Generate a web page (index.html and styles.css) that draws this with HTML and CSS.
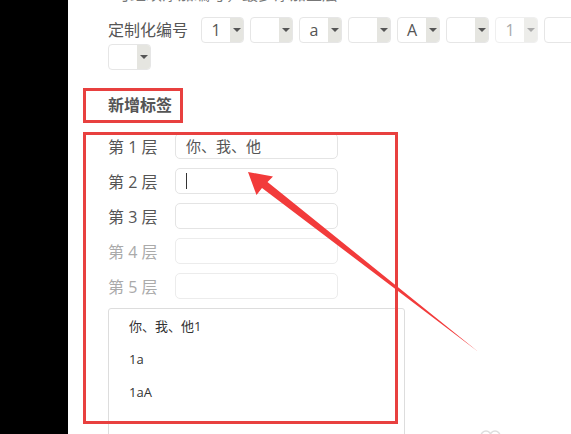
FILE: index.html
```html
<!DOCTYPE html>
<html lang="zh-CN">
  <head>
    <meta charset="UTF-8" />
    <meta name="viewport" content="width=device-width, initial-scale=1.0" />
    <title>新增标签</title>
    <link rel="stylesheet" href="styles.css">
  </head>
  <body>
    <div class="page">
      <div class="tip-line">可继续添加编号，最多添加五层 <span class="tip-mark"></span></div>

      <div class="code-row">
        <span class="code-label">定制化编号</span>
        <div class="pick"><span class="pick-val">1</span><span class="pick-btn"></span></div>
        <div class="pick"><span class="pick-val"></span><span class="pick-btn"></span></div>
        <div class="pick"><span class="pick-val">a</span><span class="pick-btn"></span></div>
        <div class="pick"><span class="pick-val"></span><span class="pick-btn"></span></div>
        <div class="pick"><span class="pick-val">A</span><span class="pick-btn"></span></div>
        <div class="pick"><span class="pick-val"></span><span class="pick-btn"></span></div>
        <div class="pick off"><span class="pick-val">1</span><span class="pick-btn"></span></div>
        <div class="pick"><span class="pick-val"></span><span class="pick-btn"></span></div>
        <div class="pick"><span class="pick-val"></span><span class="pick-btn"></span></div>
      </div>

      <h3 class="add-title">新增标签</h3>

      <div class="layers">
        <div class="layer-row">
          <span class="layer-label">第 1 层</span>
          <div class="layer-input">你、我、他</div>
        </div>
        <div class="layer-row">
          <span class="layer-label">第 2 层</span>
          <div class="layer-input"><span class="caret"></span></div>
        </div>
        <div class="layer-row">
          <span class="layer-label">第 3 层</span>
          <div class="layer-input"></div>
        </div>
        <div class="layer-row off">
          <span class="layer-label">第 4 层</span>
          <div class="layer-input"></div>
        </div>
        <div class="layer-row off">
          <span class="layer-label">第 5 层</span>
          <div class="layer-input"></div>
        </div>

        <ul class="preview">
          <li>你、我、他1</li>
          <li>1a</li>
          <li>1aA</li>
        </ul>

        <div class="mark"></div>
      </div>
    </div>

    <!-- pointer drawn over the form -->
    <svg class="pointer" width="571" height="434" viewBox="0 0 571 434">
      <polygon fill="#f23b3b"
        points="248,172 273,176.5 267.5,182 478.5,352 262,188 256.5,195" />
      <g fill="none" stroke="#dedede" stroke-width="1.5">
        <circle cx="486" cy="436" r="5" />
        <circle cx="495" cy="436" r="5" />
      </g>
    </svg>
  </body>
</html>
```

FILE: styles.css
```css
* {
  box-sizing: border-box;
}

body {
  margin: 0;
  width: 571px;
  height: 434px;
  overflow: hidden;
  background: #000;
  display: flex;
  position: relative;
  font-family: "Open Sans", "Noto Sans CJK SC", sans-serif;
}

.page {
  margin-left: 68px;
  width: 620px;
  flex-shrink: 0;
  background: #fff;
  padding-left: 40px;
  color: #555;
}

.tip-line {
  margin-top: -16px;
  margin-left: 6px;
  height: 20px;
  line-height: 20px;
  font-size: 16px;
  color: #777;
}

.tip-mark {
  display: inline-block;
  width: 9px;
  height: 9px;
  background: #ccc;
  vertical-align: middle;
}

/* numbering pickers */
.code-row {
  margin-top: 13px;
  width: 500px;
  display: flex;
  flex-wrap: wrap;
  align-items: center;
  column-gap: 6px;
  row-gap: 1px;
}

.code-label {
  width: 87px;
  font-size: 16px;
  line-height: 26px;
  color: #555;
}

.pick {
  width: 43px;
  height: 26px;
  display: flex;
  border: 1px solid #e6e6e6;
  border-radius: 4px;
  overflow: hidden;
}

.pick-val {
  flex: 1;
  text-align: center;
  font-size: 16px;
  line-height: 24px;
  color: #555;
}

.pick-btn {
  width: 13px;
  background: #e5e5e0;
  position: relative;
}

.pick-btn::after {
  content: "";
  position: absolute;
  left: 3px;
  top: 10px;
  border-left: 4px solid transparent;
  border-right: 4px solid transparent;
  border-top: 4px solid #555;
}

.pick.off {
  border-color: #efefef;
}

.pick.off .pick-val {
  color: #aaa;
}

.pick.off .pick-btn {
  background: #ededea;
}

.pick.off .pick-btn::after {
  border-top-color: #aaa;
}

/* section title with red outline */
.add-title {
  margin: 18px 0 0 -25px;
  width: 100px;
  height: 35px;
  padding-left: 22px;
  border: 3px solid #e8403f;
  font-size: 16px;
  line-height: 29px;
  font-weight: bold;
  color: #555;
}

.layers {
  position: relative;
  margin-top: 10px;
  display: flex;
  flex-direction: column;
  gap: 9px;
}

.layer-row {
  display: flex;
  align-items: center;
}

.layer-label {
  width: 67px;
  font-size: 16px;
  color: #555;
}

.layer-row.off .layer-label {
  color: #aaa;
}

.layer-input {
  width: 163px;
  height: 26px;
  border: 1px solid #e4e4e4;
  border-radius: 5px;
  padding-left: 10px;
  font-size: 15px;
  line-height: 24px;
  color: #555;
}

.layer-row.off .layer-input {
  border-color: #ececec;
}

.caret {
  display: inline-block;
  width: 1px;
  height: 16px;
  margin-top: 4px;
  background: #333;
  vertical-align: top;
}

.preview {
  list-style: none;
  margin: 0;
  width: 297px;
  height: 140px;
  padding: 1px 0 0 20px;
  border: 1px solid #ddd;
  border-radius: 3px;
}

.preview li {
  font-size: 13px;
  line-height: 33px;
  color: #333;
}

.mark {
  position: absolute;
  left: -25px;
  top: -1px;
  width: 315px;
  height: 292px;
  border: 3px solid #e8403f;
}

.pointer {
  position: absolute;
  left: 0;
  top: 0;
}
```
